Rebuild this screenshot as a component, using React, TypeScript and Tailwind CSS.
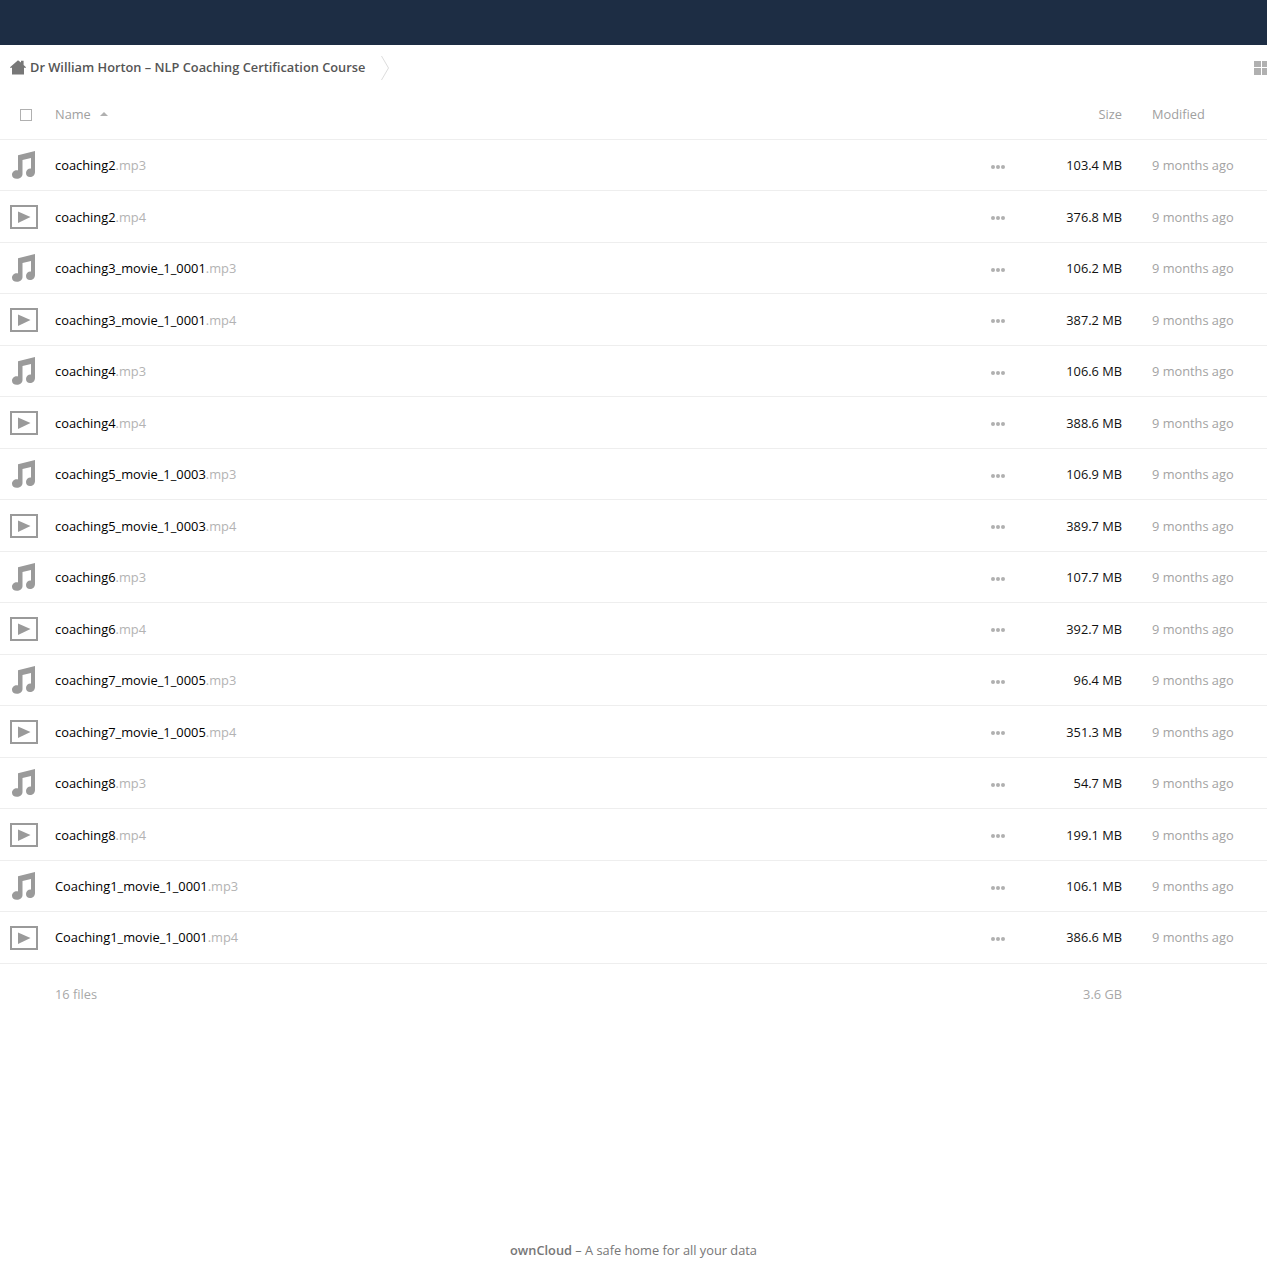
import React from "react";

type F = { n: string; e: string; s: string };
const files: F[] = [
  { n: "coaching2", e: ".mp3", s: "103.4 MB" },
  { n: "coaching2", e: ".mp4", s: "376.8 MB" },
  { n: "coaching3_movie_1_0001", e: ".mp3", s: "106.2 MB" },
  { n: "coaching3_movie_1_0001", e: ".mp4", s: "387.2 MB" },
  { n: "coaching4", e: ".mp3", s: "106.6 MB" },
  { n: "coaching4", e: ".mp4", s: "388.6 MB" },
  { n: "coaching5_movie_1_0003", e: ".mp3", s: "106.9 MB" },
  { n: "coaching5_movie_1_0003", e: ".mp4", s: "389.7 MB" },
  { n: "coaching6", e: ".mp3", s: "107.7 MB" },
  { n: "coaching6", e: ".mp4", s: "392.7 MB" },
  { n: "coaching7_movie_1_0005", e: ".mp3", s: "96.4 MB" },
  { n: "coaching7_movie_1_0005", e: ".mp4", s: "351.3 MB" },
  { n: "coaching8", e: ".mp3", s: "54.7 MB" },
  { n: "coaching8", e: ".mp4", s: "199.1 MB" },
  { n: "Coaching1_movie_1_0001", e: ".mp3", s: "106.1 MB" },
  { n: "Coaching1_movie_1_0001", e: ".mp4", s: "386.6 MB" },
];

function Music() {
  return (
    <svg width="28" height="30" viewBox="0 0 28 30" className="block">
      <path
        fill="#9a9a9a"
        d="M8 5.2 L25 1 V22 C25 25 22.8 27 20 27 C17.6 27 16 25.6 16 23 C16 20.2 18 18.4 20.5 18.4 L21 18.5 V8 L12.5 10 V24 C12.5 26.8 10 28.8 6.8 28.8 C4 28.8 2 27.2 2 24.8 C2 22 4.2 20.2 6.8 20.2 C7.4 20.2 7.7 20.2 8 20.4 Z"
      />
    </svg>
  );
}

function Video() {
  return (
    <svg width="28" height="24" viewBox="0 0 28 24" className="mt-[2px] block">
      <rect x="1" y="1" width="26" height="22" fill="none" stroke="#9a9a9a" strokeWidth="2" />
      <path fill="#9a9a9a" d="M8 6.5 L20.5 12 L8 18 Z" />
    </svg>
  );
}

function Row({ f, last }: { f: F; last: boolean }) {
  const audio = f.e === ".mp3";
  const nudge = last ? "pt-0" : "pt-[2px]";
  return (
    <div className="box-border flex h-[51.5px] items-center border-b border-[#eeeeee]">
      <div className="flex w-[55px] shrink-0 justify-start pl-[10px]">{audio ? <Music /> : <Video />}</div>
      <div className={`flex-1 ${nudge} text-[12.87px] text-black`}>
        {f.n}
        <span className="text-[#b3b3b3]">{f.e}</span>
      </div>
      <div className="mr-[19px] flex w-[20px] shrink-0 translate-y-[2px] items-center justify-center gap-[1px]">
        <span className="h-[4px] w-[4px] rounded-full bg-[#b0b0b0]" />
        <span className="h-[4px] w-[4px] rounded-full bg-[#b0b0b0]" />
        <span className="h-[4px] w-[4px] rounded-full bg-[#b0b0b0]" />
      </div>
      <div className={`w-[95px] shrink-0 ${nudge} text-right text-[12.8px] text-[#111111]`}>{f.s}</div>
      <div className={`w-[145px] shrink-0 pl-[30px] ${nudge} text-[12.8px] text-[#a3a3a3]`}>9 months ago</div>
    </div>
  );
}

export default function App() {
  return (
    <div className="flex h-[1280px] flex-col bg-white font-['Open_Sans',sans-serif] text-[12.8px]">
      <div className="h-[45px] shrink-0 bg-[#1d2d44]" />
      <div className="flex h-[45px] shrink-0 items-center pl-[10px]">
        <svg width="16" height="15" viewBox="0 0 16 15" className="mr-[4px] block">
          <path fill="#777777" d="M8 0.2 L11 2.6 V0.8 H13.6 V5 L16 7.2 V7.8 H14 V14.5 H2 V7.8 H0 V7.2 Z" />
        </svg>
        <span className="font-semibold text-[#555555]">Dr William Horton – NLP Coaching Certification Course</span>
        <svg width="10" height="26" viewBox="0 0 10 26" className="ml-[15px] block">
          <path fill="none" stroke="#dddddd" d="M1.5 1 L8.5 13 L1.5 25" />
        </svg>
        <div className="ml-auto grid translate-x-[1px] grid-cols-2 gap-[1px]">
          <span className="h-[6.5px] w-[6.5px] bg-[#b0b0b0]" />
          <span className="h-[6.5px] w-[6.5px] bg-[#b0b0b0]" />
          <span className="h-[6.5px] w-[6.5px] bg-[#b0b0b0]" />
          <span className="h-[6.5px] w-[6.5px] bg-[#b0b0b0]" />
        </div>
      </div>
      <div className="box-border flex h-[49.5px] shrink-0 items-center border-b border-[#eeeeee] text-[#a0a0a0]">
        <div className="flex w-[55px] shrink-0 pl-[20px]">
          <span className="mt-[2px] h-[12px] w-[12px] border border-[#b0b0b0] bg-white" />
        </div>
        <div className="flex flex-1 items-center">
          <span>Name</span>
          <svg width="8" height="4" viewBox="0 0 8 4" className="ml-[9px] block">
            <path fill="#b0b0b0" d="M4 0 L8 4 H0 Z" />
          </svg>
        </div>
        <div className="w-[95px] shrink-0 text-right">Size</div>
        <div className="w-[145px] shrink-0 pl-[30px]">Modified</div>
      </div>
      {files.map((f, i) => (
        <Row key={f.n + f.e} f={f} last={i === files.length - 1} />
      ))}
      <div className="flex h-[61.5px] shrink-0 items-center text-[#a8a8a8]">
        <div className="w-[55px] shrink-0" />
        <div className="flex-1">16 files</div>
        <div className="w-[95px] shrink-0 text-right">3.6 GB</div>
        <div className="w-[145px] shrink-0" />
      </div>
      <div className="mt-auto flex h-[40px] justify-center pt-[1px] text-[#777777]">
        <p>
          <span className="font-semibold">ownCloud</span> – A safe home for all your data
        </p>
      </div>
    </div>
  );
}
